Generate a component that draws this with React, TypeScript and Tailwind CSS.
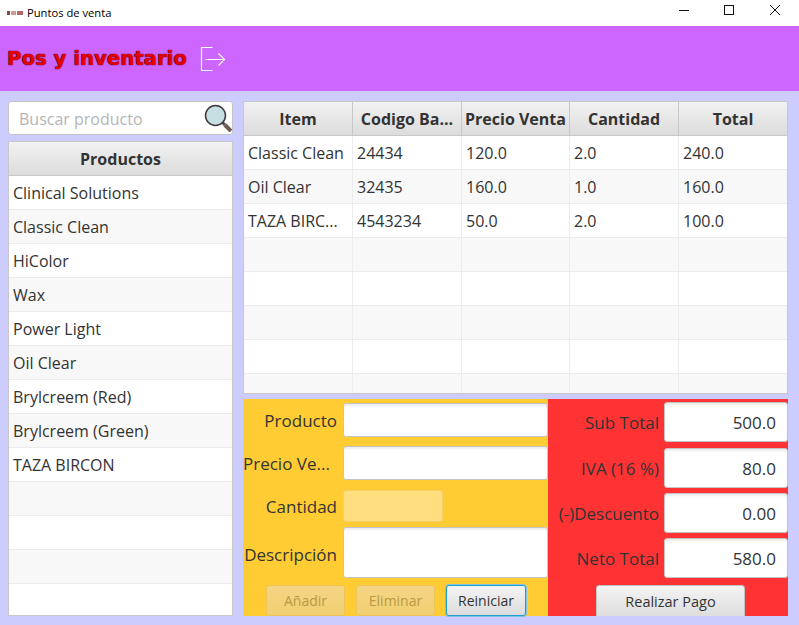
import React from 'react';

const productos = ['Clinical Solutions', 'Classic Clean', 'HiColor', 'Wax', 'Power Light', 'Oil Clear', 'Brylcreem (Red)', 'Brylcreem (Green)', 'TAZA BIRCON', '', '', '', ''];

const columnas = [
  { titulo: 'Item', ancho: 'w-[109px]' },
  { titulo: 'Codigo Ba...', ancho: 'w-[109px]' },
  { titulo: 'Precio Venta', ancho: 'w-[108px]' },
  { titulo: 'Cantidad', ancho: 'w-[109px]' },
  { titulo: 'Total', ancho: 'flex-1' },
];

const filas = [
  ['Classic Clean', '24434', '120.0', '2.0', '240.0'],
  ['Oil Clear', '32435', '160.0', '1.0', '160.0'],
  ['TAZA BIRC...', '4543234', '50.0', '2.0', '100.0'],
  ['', '', '', '', ''],
  ['', '', '', '', ''],
  ['', '', '', '', ''],
  ['', '', '', '', ''],
  ['', '', '', '', ''],
];

const totales = [
  { label: 'Sub Total', valor: '500.0', margen: 'mt-[3px]' },
  { label: 'IVA (16 %)', valor: '80.0', margen: 'mt-[6px]' },
  { label: '(-)Descuento', valor: '0.00', margen: 'mt-[5px]' },
  { label: 'Neto Total', valor: '580.0', margen: 'mt-[5px]' },
];

const campo = 'bg-white border border-[#c4c4c4] rounded-[3px] shadow-[inset_0_2px_2px_#eeeeee]';

function TitleBar() {
  return (
    <div className="flex h-[26px] items-center bg-white text-black">
      <svg width="16" height="6" viewBox="0 0 16 6" className="ml-[7px]">
        <rect x="0" y="1" width="3" height="4" fill="#8a4a4a" />
        <rect x="4" y="1" width="5" height="4" fill="#c99a9a" />
        <rect x="10" y="1" width="6" height="4" fill="#b56a6a" />
      </svg>
      <span className="ml-[4px] font-['Open_Sans',sans-serif] text-[11.2px]">Puntos de venta</span>
      <div className="mr-[1px] ml-auto flex items-center">
        <svg width="46" height="20" viewBox="0 0 46 20"><path d="M19 7.5h10" stroke="#111" fill="none" /></svg>
        <svg width="46" height="20" viewBox="0 0 46 20"><rect x="18.5" y="2.5" width="9" height="9" stroke="#111" fill="none" /></svg>
        <svg width="46" height="20" viewBox="0 0 46 20"><path d="M18 2l10 10M28 2L18 12" stroke="#111" fill="none" /></svg>
      </div>
    </div>
  );
}

function Header() {
  return (
    <div className="flex h-[65px] items-center bg-[#cc66ff] pl-[7px]">
      <span className="font-['DejaVu_Sans',sans-serif] text-[19.7px] font-bold leading-none text-[#e60000] [text-shadow:0_0_1px_#4a0a20,0_0_1px_#4a0a20]">
        Pos y inventario
      </span>
      <svg width="26" height="26" viewBox="0 0 26 26" className="ml-[13px]" fill="none" stroke="#ffffff" strokeWidth="1.2">
        <path d="M12.5 1.5H1.5v23h11" />
        <path d="M5.5 13.5h19M18.5 7.5l6 6-6 6" />
      </svg>
    </div>
  );
}

function Buscador() {
  return (
    <div className="flex h-[34px] items-center rounded-[3px] border border-[#c4c4c4] bg-white pl-[10px]">
      <span className="mt-[1px] text-[16px] text-[#b5b5b5]">Buscar producto</span>
      <svg width="28" height="28" viewBox="0 0 28 28" className="ml-auto">
        <path d="M18 18l3 3" stroke="#5a4a4a" strokeWidth="3" />
        <path d="M21 21l6 6" stroke="#6e5a55" strokeWidth="4" />
        <circle cx="11.5" cy="11.5" r="10" fill="#c6dfe2" stroke="#3f3a3a" strokeWidth="1.5" />
      </svg>
    </div>
  );
}

function Encabezado({ className = '', children }: { className?: string; children: React.ReactNode }) {
  return (
    <div className={`flex h-[34px] items-center justify-center border-[#c8c8c8] bg-linear-to-b from-[#f2f2f2] to-[#dcdcdc] text-[16px] font-bold text-[#333333] ${className}`}>
      {children}
    </div>
  );
}

function Productos() {
  return (
    <div className="flex w-[225px] flex-col">
      <Buscador />
      <div className="mt-[6px] flex flex-1 flex-col overflow-hidden border border-[#c8c8c8] bg-white">
        <Encabezado className="shrink-0 border-b">Productos</Encabezado>
        {productos.map((p, i) => (
          <div key={i} className={`flex h-[34px] shrink-0 items-center border-b border-[#ececec] pl-[4px] text-[16px] text-[#333333] ${i % 2 === 1 ? 'bg-[#f8f8f8]' : 'bg-white'}`}>
            {p}
          </div>
        ))}
      </div>
    </div>
  );
}

function Tabla() {
  return (
    <div className="h-[293px] shrink-0 overflow-hidden border border-[#c8c8c8] bg-white">
      <div className="flex">
        {columnas.map((c) => (
          <Encabezado key={c.titulo} className={`${c.ancho} border-r border-b last:border-r-0`}>{c.titulo}</Encabezado>
        ))}
      </div>
      {filas.map((fila, i) => (
        <div key={i} className={`flex h-[34px] border-b border-[#ececec] text-[16px] text-[#333333] ${i % 2 === 1 ? 'bg-[#f8f8f8]' : 'bg-white'}`}>
          {fila.map((valor, j) => (
            <div key={j} className={`${columnas[j].ancho} flex items-center border-r border-[#ececec] pl-[4px] last:border-r-0`}>{valor}</div>
          ))}
        </div>
      ))}
    </div>
  );
}

function Etiqueta({ className = 'pt-[2px]', children }: { className?: string; children: React.ReactNode }) {
  return <div className={`w-[94px] text-right text-[17px] whitespace-nowrap text-[#333333] ${className}`}>{children}</div>;
}

function Formulario() {
  return (
    <div className="flex w-[305px] flex-col bg-[#ffcc33] pt-[4px]">
      <div className="flex h-[34px] items-center">
        <Etiqueta>Producto</Etiqueta>
        <div className={`ml-[6px] h-full flex-1 ${campo}`} />
      </div>
      <div className="mt-[9px] flex h-[34px] items-center">
        <div className="w-[94px] pt-[2px] text-[17px] whitespace-nowrap text-[#333333]">Precio Ve...</div>
        <div className={`ml-[6px] h-full flex-1 ${campo}`} />
      </div>
      <div className="mt-[10px] flex h-[33px] items-center">
        <Etiqueta>Cantidad</Etiqueta>
        <div className="ml-[6px] h-full w-[100px] rounded-[3px] border border-[#f5d06a] bg-[#ffde80]" />
      </div>
      <div className="mt-[5px] flex h-[51px] items-center">
        <Etiqueta className="pt-[4px]">Descripción</Etiqueta>
        <div className={`ml-[6px] h-full flex-1 ${campo}`} />
      </div>
      <div className="mt-[7px] flex gap-[11px] pl-[23px] text-[14px]">
        <button className="h-[31px] w-[79px] rounded-[3px] border border-[#eec45a] bg-linear-to-b from-[#f5d584] to-[#f0d070] text-[#b89a45]">Añadir</button>
        <button className="h-[31px] w-[79px] rounded-[3px] border border-[#eec45a] bg-linear-to-b from-[#f5d584] to-[#f0d070] text-[#b89a45]">Eliminar</button>
        <button className="h-[31px] w-[80px] rounded-[3px] border border-[#1f9ed1] bg-linear-to-b from-[#f4f4f4] to-[#dcdcdc] text-[#333333] shadow-[0_0_0_1px_#7cc4e0]">Reiniciar</button>
      </div>
    </div>
  );
}

function Totales() {
  return (
    <div className="flex flex-1 flex-col overflow-hidden bg-[#ff3333]">
      {totales.map((t) => (
        <div key={t.label} className={`flex h-[40px] shrink-0 items-center ${t.margen}`}>
          <div className="w-[111px] pt-[2px] text-right text-[17px] whitespace-nowrap text-[#333333]">{t.label}</div>
          <div className={`ml-[5px] flex h-full flex-1 items-center justify-end pt-[2px] pr-[11px] text-[17px] text-[#333333] ${campo}`}>{t.valor}</div>
        </div>
      ))}
      <div className="mt-[7px] flex justify-center pl-[5px]">
        <button className="h-[34px] w-[149px] shrink-0 rounded-[3px] border border-[#c4c4c4] bg-linear-to-b from-[#f4f4f4] to-[#dcdcdc] text-[14.5px] text-[#333333]">Realizar Pago</button>
      </div>
    </div>
  );
}

export default function App() {
  return (
    <div className="flex h-[625px] w-[799px] flex-col overflow-hidden bg-[#ccccff] font-['Open_Sans',sans-serif]">
      <TitleBar />
      <Header />
      <div className="flex h-[534px] gap-[10px] pt-[10px] pb-[9px] pl-[8px]">
        <Productos />
        <div className="flex w-[545px] flex-col gap-[5px]">
          <Tabla />
          <div className="flex h-[217px] shrink-0">
            <Formulario />
            <Totales />
          </div>
        </div>
      </div>
    </div>
  );
}
